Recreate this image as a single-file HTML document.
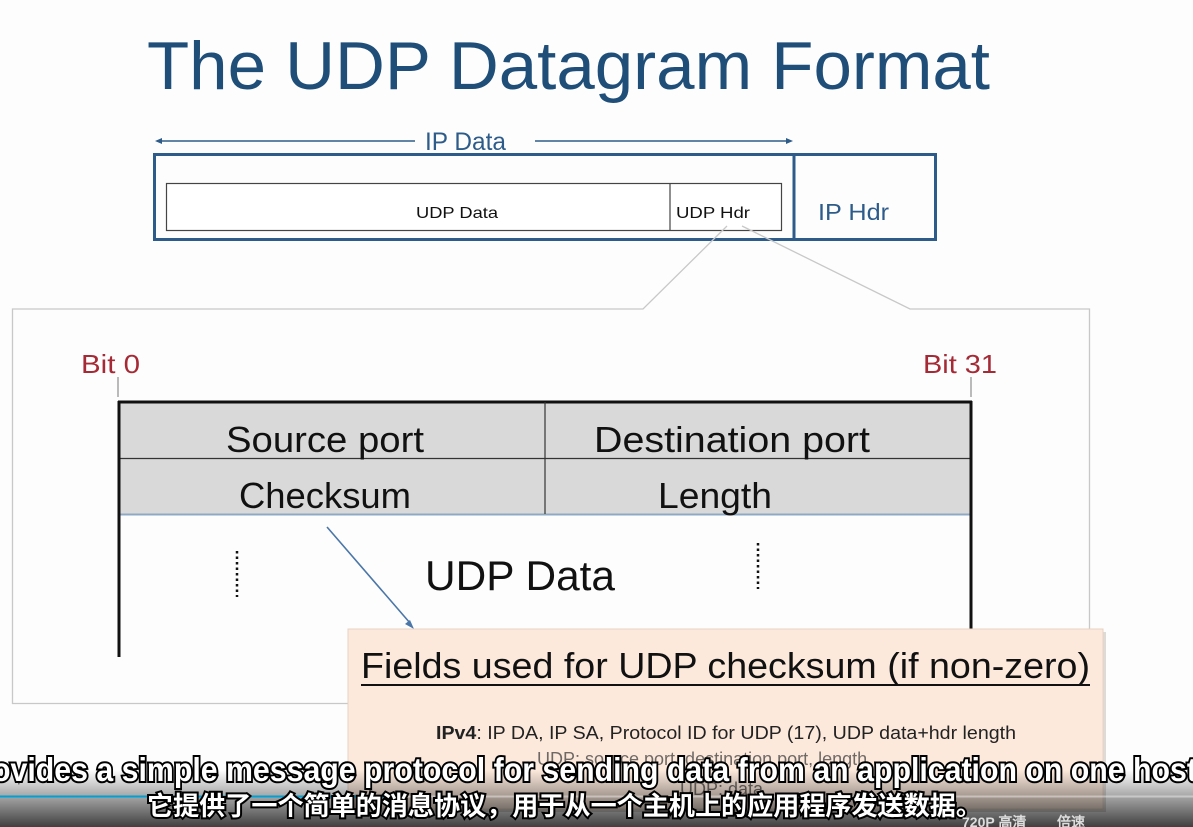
<!DOCTYPE html>
<html><head><meta charset="utf-8"><style>
html,body{margin:0;padding:0;background:#fff;width:1193px;height:827px;overflow:hidden}
svg{display:block}
</style></head><body>
<svg width="1193" height="827" viewBox="0 0 1193 827" xmlns="http://www.w3.org/2000/svg" font-family="Liberation Sans, sans-serif">
<rect width="1193" height="827" fill="#fdfdfd"/>
<text x="147" y="89" font-size="68" fill="#1f4e79" textLength="843" lengthAdjust="spacingAndGlyphs">The UDP Datagram Format</text>
<!-- IP data arrow -->
<line x1="157" y1="141" x2="415" y2="141" stroke="#2e5c8a" stroke-width="1.5"/>
<line x1="535" y1="141" x2="790" y2="141" stroke="#2e5c8a" stroke-width="1.5"/>
<path d="M155 141 l7 -3 v6z M793 141 l-7 -3 v6z" fill="#2e5c8a"/>
<text x="425" y="150" font-size="25" fill="#2e5c8a" textLength="81" lengthAdjust="spacingAndGlyphs">IP Data</text>
<rect x="154.5" y="154.5" width="781" height="85" fill="none" stroke="#2e5c8a" stroke-width="3"/>
<line x1="794" y1="154" x2="794" y2="240" stroke="#2e5c8a" stroke-width="3"/>
<text x="818" y="220" font-size="23" fill="#2e5c8a" textLength="71" lengthAdjust="spacingAndGlyphs">IP Hdr</text>
<rect x="166.5" y="183.5" width="615" height="47" fill="#fff" stroke="#444" stroke-width="1.2"/>
<line x1="670" y1="183" x2="670" y2="231" stroke="#444" stroke-width="1.2"/>
<text x="416" y="218" font-size="16" fill="#111" textLength="82" lengthAdjust="spacingAndGlyphs">UDP Data</text>
<text x="676" y="218" font-size="16" fill="#111" textLength="74" lengthAdjust="spacingAndGlyphs">UDP Hdr</text>
<!-- zoom lines/panel -->
<path d="M727 226 L643 309 L12.5 309 L12.5 703.5 L348 703.5" fill="none" stroke="#c8c8c8" stroke-width="1.3"/>
<path d="M742 226 L910 309 L1089.5 309 L1089.5 630" fill="none" stroke="#c8c8c8" stroke-width="1.3"/>
<!-- bit labels -->
<text x="81" y="373" font-size="26" fill="#a52a35" textLength="59" lengthAdjust="spacingAndGlyphs">Bit 0</text>
<text x="923" y="373" font-size="26" fill="#a52a35" textLength="74" lengthAdjust="spacingAndGlyphs">Bit 31</text>
<line x1="118" y1="377" x2="118" y2="397" stroke="#777" stroke-width="1"/>
<line x1="971" y1="377" x2="971" y2="397" stroke="#777" stroke-width="1"/>
<!-- table -->
<rect x="119" y="402" width="852" height="112" fill="#d9d9d9"/>
<line x1="118" y1="402" x2="972" y2="402" stroke="#111" stroke-width="3"/>
<line x1="119" y1="458.5" x2="971" y2="458.5" stroke="#333" stroke-width="1.2"/>
<line x1="119" y1="514.5" x2="971" y2="514.5" stroke="#8fa9c4" stroke-width="2"/>
<line x1="545" y1="402" x2="545" y2="514" stroke="#333" stroke-width="1.2"/>
<line x1="119" y1="401" x2="119" y2="657" stroke="#111" stroke-width="3"/>
<line x1="971" y1="401" x2="971" y2="630" stroke="#111" stroke-width="3"/>
<text x="226" y="452" font-size="36" fill="#111" textLength="198" lengthAdjust="spacingAndGlyphs">Source port</text>
<text x="594" y="452" font-size="36" fill="#111" textLength="276" lengthAdjust="spacingAndGlyphs">Destination port</text>
<text x="239" y="508" font-size="36" fill="#111" textLength="172" lengthAdjust="spacingAndGlyphs">Checksum</text>
<text x="658" y="508" font-size="36" fill="#111" textLength="114" lengthAdjust="spacingAndGlyphs">Length</text>
<text x="425" y="590" font-size="42" fill="#111" textLength="190" lengthAdjust="spacingAndGlyphs">UDP Data</text>
<line x1="237" y1="551" x2="237" y2="597" stroke="#111" stroke-width="2.5" stroke-dasharray="2.5 3"/>
<line x1="758" y1="543" x2="758" y2="589" stroke="#111" stroke-width="2.5" stroke-dasharray="2.5 3"/>
<!-- arrow -->
<line x1="327" y1="527" x2="410" y2="623" stroke="#4a76a8" stroke-width="1.6"/>
<path d="M414 629 l-9 -5 l5 -4z" fill="#4a76a8"/>
<!-- callout -->
<rect x="350" y="632" width="756" height="180" fill="#c9c3bd" opacity="0.6"/>
<rect x="348" y="629" width="755" height="180" fill="#fce9dc" stroke="#e6d2c4" stroke-width="1"/>
<text x="361" y="678" font-size="36" fill="#111" textLength="729" lengthAdjust="spacingAndGlyphs">Fields used for UDP checksum (if non-zero)</text>
<line x1="361" y1="685" x2="1090" y2="685" stroke="#111" stroke-width="2"/>
<text x="436" y="739" font-size="18" fill="#222" textLength="580" lengthAdjust="spacingAndGlyphs"><tspan font-weight="bold">IPv4</tspan>: IP DA, IP SA, Protocol ID for UDP (17), UDP data+hdr length</text>
<text x="537" y="765" font-size="18" fill="#333" opacity="0.7">UDP: source port, destination port, length</text>
<text x="680" y="795" font-size="18" fill="#333" opacity="0.7">UDP: data</text>
<!-- player bottom gradient -->
<defs><linearGradient id="g" x1="0" y1="0" x2="0" y2="1"><stop offset="0" stop-color="#000" stop-opacity="0"/><stop offset="1" stop-color="#000" stop-opacity="0.75"/></linearGradient></defs>
<rect x="0" y="770" width="1193" height="57" fill="url(#g)"/>
<line x1="0" y1="796.5" x2="1193" y2="796.5" stroke="#ffffff" stroke-opacity="0.4" stroke-width="2"/>
<line x1="0" y1="796.5" x2="390" y2="796.5" stroke="#00a1d6" stroke-width="2"/>
<!-- subtitles -->
<text x="-8" y="781" font-size="33" font-weight="bold" fill="#fff" stroke="#000" stroke-width="4" paint-order="stroke" textLength="1205" lengthAdjust="spacingAndGlyphs">ovides a simple message protocol for sending data from an application on one host</text>
<text x="147" y="815" font-size="26" font-weight="bold" fill="#fff" stroke="#000" stroke-width="4" paint-order="stroke" font-family="Liberation Sans, Noto Sans CJK SC, sans-serif" textLength="835" lengthAdjust="spacingAndGlyphs">它提供了一个简单的消息协议，用于从一个主机上的应用程序发送数据。</text>
<text x="962" y="827" font-size="14" font-weight="bold" fill="#ddd">720P 高清</text>
<text x="1057" y="827" font-size="14" font-weight="bold" fill="#ddd">倍速</text>
</svg>
</body></html>
